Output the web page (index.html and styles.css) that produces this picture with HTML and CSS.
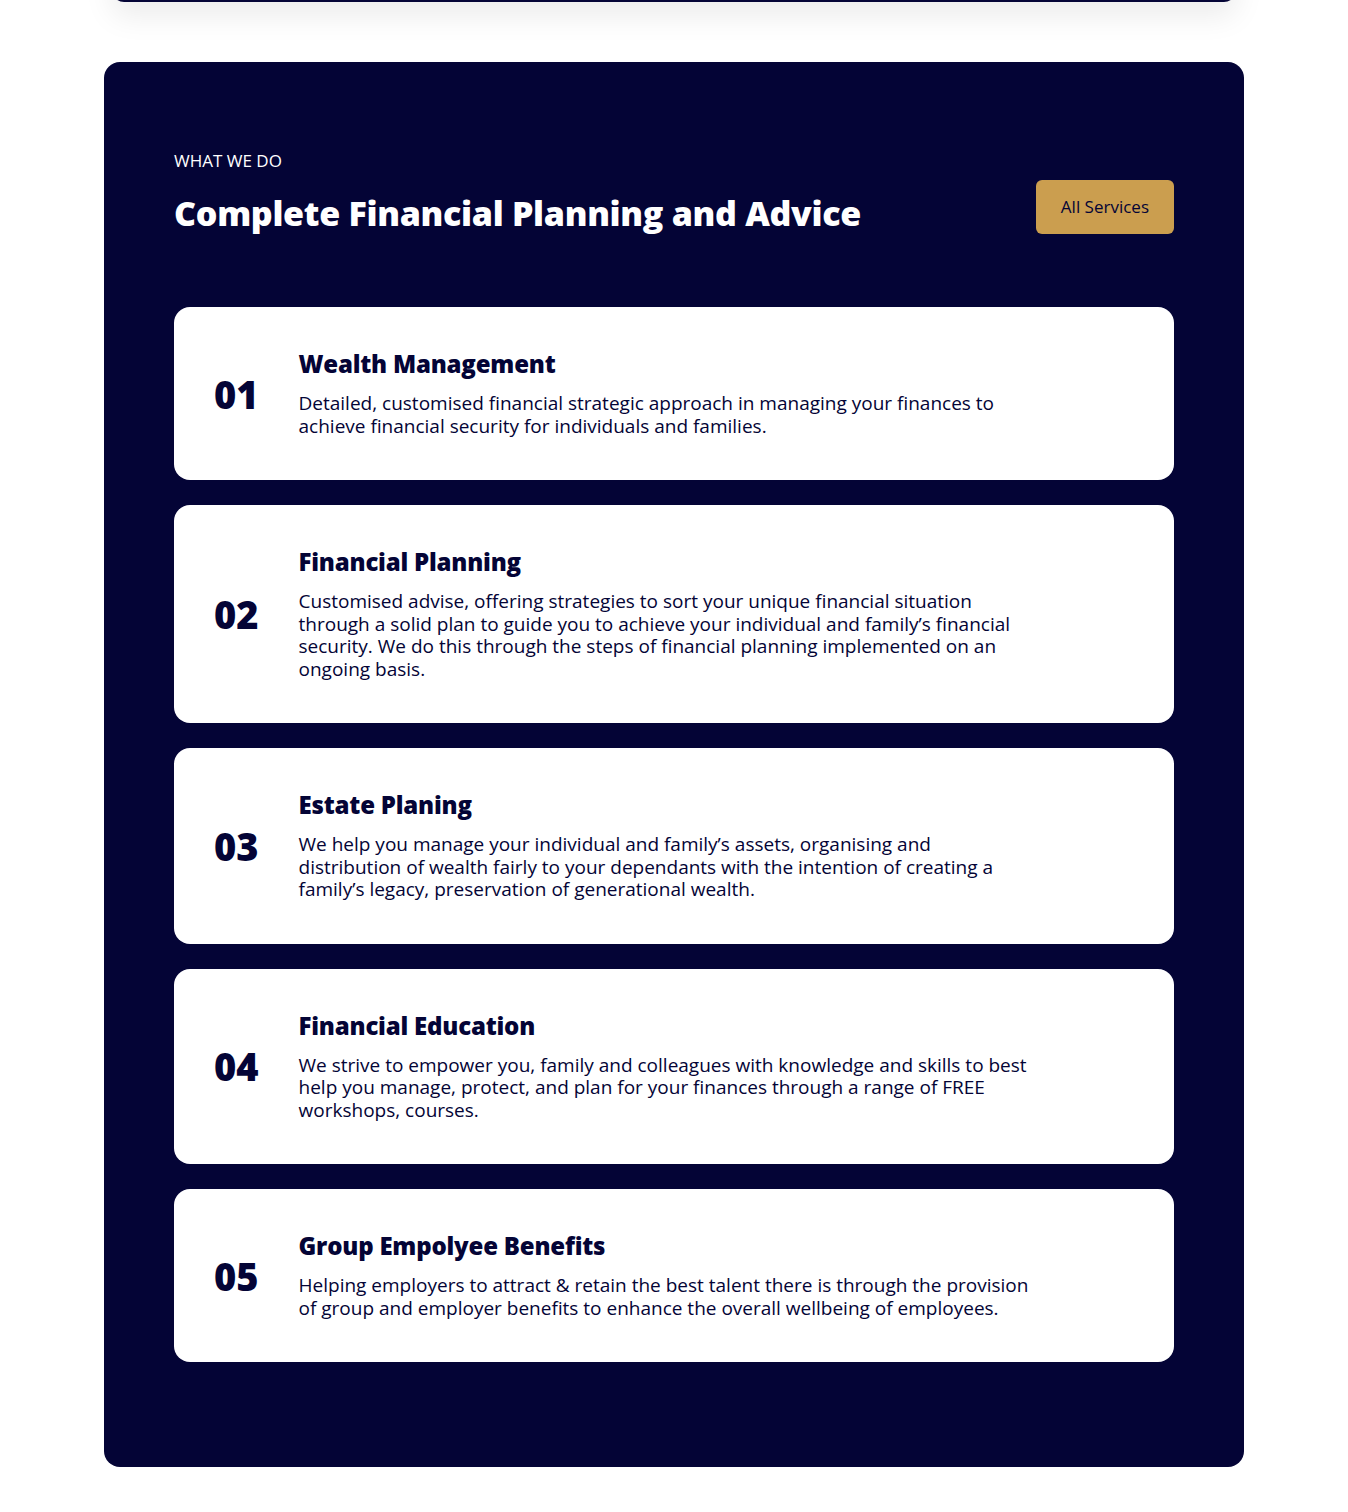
FILE: index.html
```html
<!DOCTYPE html>
<html lang="en">
<head>
    <meta charset="UTF-8">
    <meta name="viewport" content="width=device-width, initial-scale=1.0">
    <title>What We Do</title>
    <link rel="stylesheet" href="styles.css">
</head>
<body>

    <div class="top-bar"></div>

    <section class="services">
        <div class="services-head">
            <div>
                <p class="eyebrow">WHAT WE DO</p>
                <h2>Complete Financial Planning and Advice</h2>
            </div>
            <a href="#" class="btn-gold">All Services</a>
        </div>

        <div class="service-list">
            <div class="service-card">
                <span class="num">01</span>
                <div class="service-text">
                    <h3>Wealth Management</h3>
                    <p>Detailed, customised financial strategic approach in managing your finances to achieve financial security for individuals and families.</p>
                </div>
            </div>

            <div class="service-card">
                <span class="num">02</span>
                <div class="service-text">
                    <h3>Financial Planning</h3>
                    <p>Customised advise, offering strategies to sort your unique financial situation through a solid plan to guide you to achieve your individual and family’s financial security. We do this through the steps of financial planning implemented on an ongoing basis.</p>
                </div>
            </div>

            <div class="service-card">
                <span class="num">03</span>
                <div class="service-text">
                    <h3>Estate Planing</h3>
                    <p>We help you manage your individual and family’s assets, organising and distribution of wealth fairly to your dependants with the intention of creating a family’s legacy, preservation of generational wealth.</p>
                </div>
            </div>

            <div class="service-card">
                <span class="num">04</span>
                <div class="service-text">
                    <h3>Financial Education</h3>
                    <p>We strive to empower you, family and colleagues with knowledge and skills to best help you manage, protect, and plan for your finances through a range of FREE workshops, courses.</p>
                </div>
            </div>

            <div class="service-card">
                <span class="num">05</span>
                <div class="service-text">
                    <h3>Group Empolyee Benefits</h3>
                    <p>Helping employers to attract &amp; retain the best talent there is through the provision of group and employer benefits to enhance the overall wellbeing of employees.</p>
                </div>
            </div>
        </div>
    </section>

</body>
</html>
```

FILE: styles.css
```css
body {
    font-family: "Open Sans", "Noto Sans", sans-serif;
    background-color: #fff;
    margin: 0;
    color: #040436;
}

.top-bar {
    width: 1124px;
    height: 60px;
    margin: -58px auto 0;
    background-color: #040436;
    border-radius: 0 0 12px 12px;
    box-shadow: 0 14px 30px rgba(0, 0, 0, 0.08);
}

.services {
    width: 1140px;
    box-sizing: border-box;
    margin: 60px auto 45px;
    padding: 88px 70px 105px;
    background-color: #040436;
    border-radius: 16px;
}

.services-head {
    display: flex;
    justify-content: space-between;
    align-items: flex-start;
    margin-bottom: 73px;
}

.eyebrow {
    margin: 0 0 21px;
    color: #fff;
    font-size: 17px;
    line-height: 22px;
}

h2 {
    margin: 0;
    color: #fff;
    font-size: 34px;
    line-height: 40px;
    font-weight: 800;
    letter-spacing: -0.3px;
}

.btn-gold {
    margin-top: 30px;
    display: inline-block;
    background-color: #cb9e4f;
    color: #040436;
    text-decoration: none;
    font-size: 17px;
    line-height: 54px;
    padding: 0 25px;
    border-radius: 6px;
}

.service-list {
    display: flex;
    flex-direction: column;
    gap: 25px;
}

.service-card {
    display: flex;
    align-items: center;
    gap: 40px;
    background-color: #fff;
    border-radius: 16px;
    padding: 43px 40px;
}

.num {
    font-size: 38px;
    font-weight: 800;
    line-height: 1;
}

.service-text {
    max-width: 740px;
}

h3 {
    margin: 0 0 14px;
    font-size: 24px;
    line-height: 28px;
    font-weight: 800;
    letter-spacing: -0.2px;
}

.service-text p {
    margin: 0;
    font-size: 19px;
    line-height: 22.5px;
}
```
